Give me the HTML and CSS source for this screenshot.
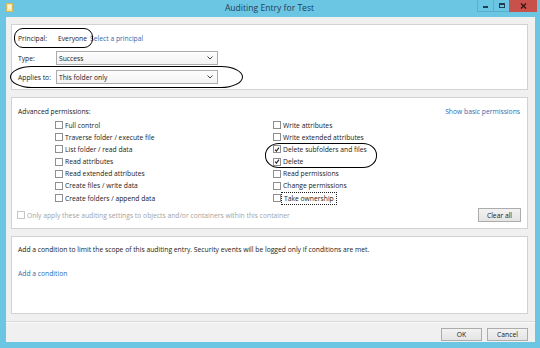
FILE: index.html
```html
<!DOCTYPE html>
<html>
<head>
<meta charset="utf-8">
<link rel="stylesheet" href="styles.css">
</head>
<body>
<div class="window">
  <div class="titlebar">
    <div class="tb-left">
      <svg class="appicon" width="7" height="9" viewBox="0 0 7 9"><rect x="0.5" y="0.5" width="6" height="8" fill="#f3e6a6" stroke="#d2b85a"/><rect x="2" y="2" width="3" height="4" fill="#fbf5d6"/></svg>
    </div>
    <div class="title">Auditing Entry for Test</div>
    <div class="controls">
      <div class="cbtn min"><span class="min-bar"></span></div>
      <div class="cbtn max"><span class="max-box"></span></div>
      <div class="cbtn close">
        <svg width="7" height="6" viewBox="0 0 7 6"><path d="M1 0.5 L6 5.5 M6 0.5 L1 5.5" stroke="#3a1512" stroke-width="1.4"/></svg>
      </div>
    </div>
  </div>
  <div class="client">
    <div class="body">
      <section class="panel p1">
        <div class="frow">
          <span class="lbl">Principal:</span>
          <span class="val">Everyone</span>
          <a class="link sel-link">Select a principal</a>
        </div>
        <div class="frow">
          <span class="lbl">Type:</span>
          <div class="select"><span>Success</span><svg width="6" height="4" viewBox="0 0 6 4"><path d="M0.5 0.5 L3 3 L5.5 0.5" fill="none" stroke="#444" stroke-width="1"/></svg></div>
        </div>
        <div class="frow">
          <span class="lbl">Applies to:</span>
          <div class="select"><span>This folder only</span><svg width="6" height="4" viewBox="0 0 6 4"><path d="M0.5 0.5 L3 3 L5.5 0.5" fill="none" stroke="#444" stroke-width="1"/></svg></div>
        </div>
      </section>

      <section class="panel p2">
        <div class="p2-head">
          <span>Advanced permissions:</span>
          <a class="link">Show basic permissions</a>
        </div>
        <div class="perms">
          <div class="col">
            <div class="perm"><span class="cb"></span><span>Full control</span></div>
            <div class="perm"><span class="cb"></span><span>Traverse folder / execute file</span></div>
            <div class="perm"><span class="cb"></span><span>List folder / read data</span></div>
            <div class="perm"><span class="cb"></span><span>Read attributes</span></div>
            <div class="perm"><span class="cb"></span><span>Read extended attributes</span></div>
            <div class="perm"><span class="cb"></span><span>Create files / write data</span></div>
            <div class="perm"><span class="cb"></span><span>Create folders / append data</span></div>
          </div>
          <div class="col">
            <div class="perm"><span class="cb"></span><span>Write attributes</span></div>
            <div class="perm"><span class="cb"></span><span>Write extended attributes</span></div>
            <div class="perm"><span class="cb checked"><svg width="7" height="7" viewBox="0 0 7 7"><path d="M1.2 3.6 L2.8 5.3 L5.8 1.3" fill="none" stroke="#222" stroke-width="1.3"/></svg></span><span>Delete subfolders and files</span></div>
            <div class="perm"><span class="cb checked"><svg width="7" height="7" viewBox="0 0 7 7"><path d="M1.2 3.6 L2.8 5.3 L5.8 1.3" fill="none" stroke="#222" stroke-width="1.3"/></svg></span><span>Delete</span></div>
            <div class="perm"><span class="cb"></span><span>Read permissions</span></div>
            <div class="perm"><span class="cb"></span><span>Change permissions</span></div>
            <div class="perm"><span class="cb"></span><span class="focus">Take ownership</span></div>
          </div>
        </div>
        <div class="p2-foot">
          <div class="perm disabled"><span class="cb"></span><span>Only apply these auditing settings to objects and/or containers within this container</span></div>
          <button class="btn clear">Clear all</button>
        </div>
      </section>

      <section class="panel p3">
        <p class="cond-text">Add a condition to limit the scope of this auditing entry. Security events will be logged only if conditions are met.</p>
        <a class="link add-cond">Add a condition</a>
      </section>
    </div>
    <footer class="footer">
      <button class="btn">OK</button>
      <button class="btn">Cancel</button>
    </footer>
  </div>

  <div class="mark m1"></div>
  <div class="mark m2"></div>
  <div class="mark m3"></div>
</div>
</body>
</html>
```

FILE: styles.css
```css
* { box-sizing: border-box; }
html, body { margin: 0; padding: 0; }
body {
  width: 540px;
  height: 348px;
  overflow: hidden;
  font-family: "Open Sans", "Noto Sans", sans-serif;
  font-size: 6.75px;
  color: #1a1a1a;
}
.window {
  position: relative;
  width: 540px;
  height: 348px;
  background: #6bc6e3;
  display: flex;
  flex-direction: column;
}
.titlebar {
  height: 17px;
  display: grid;
  grid-template-columns: 1fr auto 1fr;
  align-items: start;
  padding-right: 3px;
}
.tb-left { padding: 3px 0 0 6px; }
.appicon { display: block; }
.title {
  font-size: 8.6px;
  color: #22405c;
  line-height: 17px;
  padding-left: 2px;
}
.controls { display: flex; justify-content: flex-end; }
.cbtn {
  height: 12px;
  display: flex;
  align-items: center;
  justify-content: center;
}
.min, .max {
  width: 16px;
  border-left: 1px solid #5aaecb;
  border-bottom: 1px solid #5aaecb;
}
.min-bar { width: 5px; height: 2px; background: #1f3d55; margin-top: 3px; }
.max-box { width: 6px; height: 5px; border: 1px solid #1f3d55; border-top-width: 2px; }
.close {
  width: 28px;
  background: #c9514b;
}
.client {
  flex: 1;
  margin: 0 5px 7px 6px;
  background: #f0f0f0;
  display: flex;
  flex-direction: column;
}
.body {
  flex: 1;
  padding: 7px 7px 7px 5px;
  display: flex;
  flex-direction: column;
  gap: 7px;
}
.panel {
  background: #fff;
  border: 1px solid #d2d2d2;
}
.p1 {
  height: 66px;
  padding: 6px 0 0 6px;
  display: flex;
  flex-direction: column;
  gap: 5px;
}
.frow {
  display: flex;
  align-items: center;
  height: 14px;
}
.frow:first-child { margin-bottom: 1px; }
.lbl { width: 38px; flex: none; }
.val { padding-left: 2px; margin-right: 3px; }
.link { color: #2e6db0; text-decoration: none; }
.select {
  width: 162px;
  height: 14px;
  border: 1px solid #acacac;
  background: linear-gradient(#fdfdfd, #f3f3f3);
  display: flex;
  align-items: center;
  justify-content: space-between;
  padding: 0 4px 0 2px;
}
.p2 {
  height: 132px;
  padding: 8px 6px 0 6px;
}
.p2-head {
  display: flex;
  justify-content: space-between;
  align-items: center;
  height: 10px;
  padding-right: 1px;
}
.perms {
  display: grid;
  grid-template-columns: 218px auto;
  margin: 3px 0 0 37px;
}
.perm {
  display: flex;
  align-items: center;
  height: 12.17px;
  gap: 2px;
}
.cb {
  width: 8px;
  height: 8px;
  border: 1px solid #8f8f8f;
  background: #fff;
  flex: none;
  display: flex;
  align-items: center;
  justify-content: center;
}
.cb svg { display: block; }
.focus { outline: 1px dotted #222; outline-offset: 1px; padding: 0 1px; }
.p2-foot {
  margin-top: 4px;
  height: 14px;
  display: flex;
  align-items: center;
  justify-content: space-between;
  margin-left: -1px;
}
.disabled { color: #a3a3a3; }
.disabled .cb { border-color: #c6c6c6; }
.btn {
  font-family: inherit;
  font-size: 6.75px;
  color: #1a1a1a;
  border: 1px solid #acacac;
  background: linear-gradient(#f2f2f2, #e4e4e4);
  padding: 0;
  height: 14px;
  width: 43px;
}
.p3 {
  height: 78px;
  padding: 8px 6px 0 6px;
}
.cond-text { margin: 0; line-height: 10px; height: 10px; }
.add-cond { display: block; margin-top: 14px; line-height: 10px; }
.footer {
  height: 21px;
  border-top: 1px solid #d9d9d9;
  box-shadow: inset 0 1px 0 #fafafa;
  display: flex;
  justify-content: flex-end;
  gap: 5px;
  padding: 6px 7px 0 0;
}
.footer .btn { width: 41px; height: 13px; }
.mark {
  position: absolute;
  border: 1.5px solid #000;
}
.m1 { left: 14px; top: 28px; width: 79px; height: 20px; border-radius: 9px / 9px; }
.m2 { left: 10px; top: 66px; width: 233px; height: 22px; border-radius: 22px / 11px; }
.m3 { left: 265px; top: 143px; width: 112px; height: 25px; border-radius: 14px / 12px; }
```
